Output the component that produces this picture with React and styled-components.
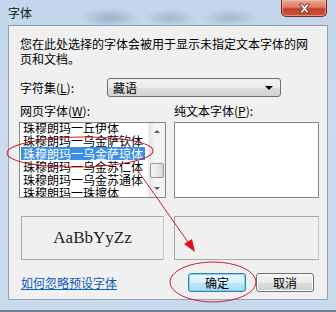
import React from "react";
import styled, { createGlobalStyle } from "styled-components";

const GlobalStyle = createGlobalStyle`
  html, body {
    margin: 0;
    padding: 0;
    background: #b8cde3;
  }
  body {
    font-family: "Noto Sans CJK SC", "Noto Sans", sans-serif;
    font-size: 12px;
    color: #000;
  }
  * { box-sizing: border-box; }
`;

const Window = styled.div`
  position: relative;
  width: 336px;
  height: 312px;
  display: flex;
  flex-direction: column;
  padding: 0 8px 10px 8px;
  overflow: hidden;
  background:
    radial-gradient(ellipse 30px 10px at 110px 18px, rgba(90, 110, 135, 0.35), transparent),
    radial-gradient(ellipse 26px 9px at 170px 18px, rgba(90, 110, 135, 0.3), transparent),
    radial-gradient(ellipse 28px 9px at 230px 18px, rgba(90, 110, 135, 0.3), transparent),
    linear-gradient(180deg, #c2d5ea 0%, #cddcec 40%, #c9daec 100%);
  border-bottom: 2px solid #6f8298;
`;

const TitleBar = styled.div`
  height: 25px;
  display: flex;
  align-items: flex-start;
  justify-content: space-between;
  margin-right: 1px;
`;

const Title = styled.span`
  margin-top: 5px;
  font-size: 12px;
  line-height: 16px;
  color: #111;
`;

const CloseButton = styled.div`
  width: 46px;
  height: 17px;
  display: flex;
  align-items: center;
  justify-content: center;
  border: 1px solid #6a2c24;
  border-top: none;
  border-radius: 0 0 5px 5px;
  background: linear-gradient(180deg, #e9a897 0%, #dc7a62 45%, #c63f27 55%, #cf563a 100%);
  box-shadow: inset 0 0 0 1px rgba(255, 200, 180, 0.5);
`;

const Client = styled.div`
  flex: 1;
  display: flex;
  flex-direction: column;
  border: 1px solid #8ea3ba;
  background: #f0f0f0;
  padding: 10px 8px 0 10px;
`;

const Description = styled.p`
  margin: 0;
  padding-left: 1px;
  height: 30px;
  line-height: 15px;
  font-size: 12px;
`;

const CharsetRow = styled.div`
  margin-top: 12px;
  height: 19px;
  display: flex;
  align-items: center;
`;

const Label = styled.span`
  padding-left: ${(p) => p.$indent ?? 1}px;
  width: ${(p) => (p.$width ? `${p.$width}px` : "auto")};
  font-size: 12px;
  line-height: 14px;
  u { text-decoration: underline; }
`;

const Select = styled.div`
  width: 174px;
  height: 19px;
  display: flex;
  align-items: center;
  justify-content: space-between;
  padding: 0 7px 0 5px;
  border: 1px solid #707070;
  border-radius: 3px;
  background: linear-gradient(180deg, #f3f3f3 0%, #ebebeb 50%, #dddddd 51%, #d3d3d3 100%);
`;

const Caret = styled.span`
  width: 0;
  height: 0;
  border-left: 4px solid transparent;
  border-right: 4px solid transparent;
  border-top: 4px solid #000;
`;

const Columns = styled.div`
  display: grid;
  grid-template-columns: 147px 145px;
  column-gap: 8px;
  margin-top: ${(p) => p.$top}px;
`;

const ListBox = styled.div`
  height: 76px;
  display: flex;
  border: 1px solid #828790;
  background: #fff;
  overflow: hidden;
`;

const Items = styled.div`
  flex: 1;
  margin-top: -2px;
  padding-left: 1px;
  overflow: hidden;
`;

const Item = styled.div`
  width: fit-content;
  height: 13px;
  line-height: 13px;
  padding: 0 2px;
  white-space: nowrap;
  font-size: 12px;
  background: ${(p) => (p.$selected ? "#3b8fe3" : "transparent")};
  color: ${(p) => (p.$selected ? "#fff" : "#000")};
`;

const ScrollBar = styled.div`
  width: 17px;
  display: flex;
  flex-direction: column;
  background: linear-gradient(90deg, #e6e6e6, #f5f5f5 40%, #f0f0f0);
  border-left: 1px solid #ececec;
`;

const ArrowButton = styled.div`
  height: 17px;
  display: flex;
  align-items: center;
  justify-content: center;
`;

const ArrowGlyph = styled.span`
  width: 0;
  height: 0;
  border-left: 3px solid transparent;
  border-right: 3px solid transparent;
  border-${(p) => (p.$down ? "top" : "bottom")}: 3px solid #5a5a5a;
`;

const Track = styled.div`
  flex: 1;
  display: flex;
  flex-direction: column;
  justify-content: flex-end;
  padding-bottom: 2px;
`;

const Thumb = styled.div`
  height: 15px;
  margin: 0 1px;
  border: 1px solid #979797;
  border-radius: 2px;
  background: linear-gradient(90deg, #f5f5f5, #e8e8e8 50%, #d6d6d6);
`;

const Preview = styled.div`
  height: 44px;
  margin: 0 ${(p) => p.$inset || 0}px;
  display: flex;
  align-items: center;
  justify-content: center;
  border: 1px solid #a8a8a8;
  border-right-color: #c8c8c8;
  font-family: "Liberation Serif", "Times New Roman", serif;
  font-size: 17px;
  color: #222;
`;

const Footer = styled.div`
  margin-top: 13px;
  height: 19px;
  display: flex;
  align-items: center;
`;

const HelpLink = styled.a`
  padding-left: 2px;
  color: #0b5cb8;
  text-decoration: underline;
  font-size: 12px;
  line-height: 14px;
  cursor: pointer;
`;

const ButtonGroup = styled.div`
  margin-left: auto;
  margin-right: 5px;
  display: flex;
  gap: 10px;
`;

const Button = styled.button`
  width: 58px;
  height: 19px;
  padding: 0;
  font-family: "Noto Sans CJK SC", sans-serif;
  font-size: 12px;
  line-height: 15px;
  color: #000;
  border-radius: 3px;
  border: 1px solid ${(p) => (p.$default ? "#3c7fb1" : "#707070")};
  background: ${(p) =>
    p.$default
      ? "linear-gradient(180deg, #eaf6fd 0%, #d9f0fc 50%, #bee6fd 51%, #a7d9f5 100%)"
      : "linear-gradient(180deg, #f2f2f2 0%, #ebebeb 50%, #dddddd 51%, #cfcfcf 100%)"};
  box-shadow: inset 0 0 0 1px ${(p) => (p.$default ? "#7fd0f5" : "#fcfcfc")};
`;

const Annotations = styled.svg`
  position: absolute;
  left: 0;
  top: 0;
  pointer-events: none;
`;

const fonts = [
  "珠穆朗玛一丘伊体",
  "珠穆朗玛一乌金萨钦体",
  "珠穆朗玛一乌金萨琼体",
  "珠穆朗玛一乌金苏仁体",
  "珠穆朗玛一乌金苏通体",
  "珠穆朗玛一珠擦体",
];

export default function App() {
  return (
    <>
      <GlobalStyle />
      <Window>
        <TitleBar>
          <Title>字体</Title>
          <CloseButton>
            <svg width="13" height="11" viewBox="0 0 13 11">
              <path
                d="M1.5 1h3l2 2.6L8.5 1h3L8 5.5l3.5 4.5h-3l-2-2.6L4.5 10h-3L5 5.5z"
                fill="#fff"
                stroke="#4a2019"
                strokeWidth="0.8"
              />
            </svg>
          </CloseButton>
        </TitleBar>

        <Client>
          <Description>您在此处选择的字体会被用于显示未指定文本字体的网页和文档。</Description>

          <CharsetRow>
            <Label $width={88}>
              字符集(<u>L</u>):
            </Label>
            <Select>
              <span>藏语</span>
              <Caret />
            </Select>
          </CharsetRow>

          <Columns $top={7}>
            <Label>
              网页字体(<u>W</u>):
            </Label>
            <Label $indent={0}>
              纯文本字体(<u>P</u>):
            </Label>
          </Columns>

          <Columns $top={4}>
            <ListBox>
              <Items>
                {fonts.map((f, i) => (
                  <Item key={f} $selected={i === 2}>
                    {f}
                  </Item>
                ))}
              </Items>
              <ScrollBar>
                <ArrowButton>
                  <ArrowGlyph />
                </ArrowButton>
                <Track>
                  <Thumb />
                </Track>
                <ArrowButton>
                  <ArrowGlyph $down />
                </ArrowButton>
              </ScrollBar>
            </ListBox>
            <ListBox />
          </Columns>

          <Columns $top={18}>
            <Preview $inset={2}>AaBbYyZz</Preview>
            <Preview />
          </Columns>

          <Footer>
            <HelpLink>如何忽略预设字体</HelpLink>
            <ButtonGroup>
              <Button $default>确定</Button>
              <Button>取消</Button>
            </ButtonGroup>
          </Footer>
        </Client>

        <Annotations width="336" height="312" viewBox="0 0 336 312">
          <ellipse cx="80" cy="152" rx="73" ry="15" fill="none" stroke="#d0202a" strokeWidth="1" transform="rotate(-1 80 152)" />
          <line x1="136" y1="168" x2="190" y2="245" stroke="#d0202a" strokeWidth="1" />
          <polygon points="195,252 184,244 192,239" fill="#e01020" />
          <ellipse cx="213" cy="282" rx="43" ry="20" fill="none" stroke="#c8202e" strokeWidth="1" />
        </Annotations>
      </Window>
    </>
  );
}
